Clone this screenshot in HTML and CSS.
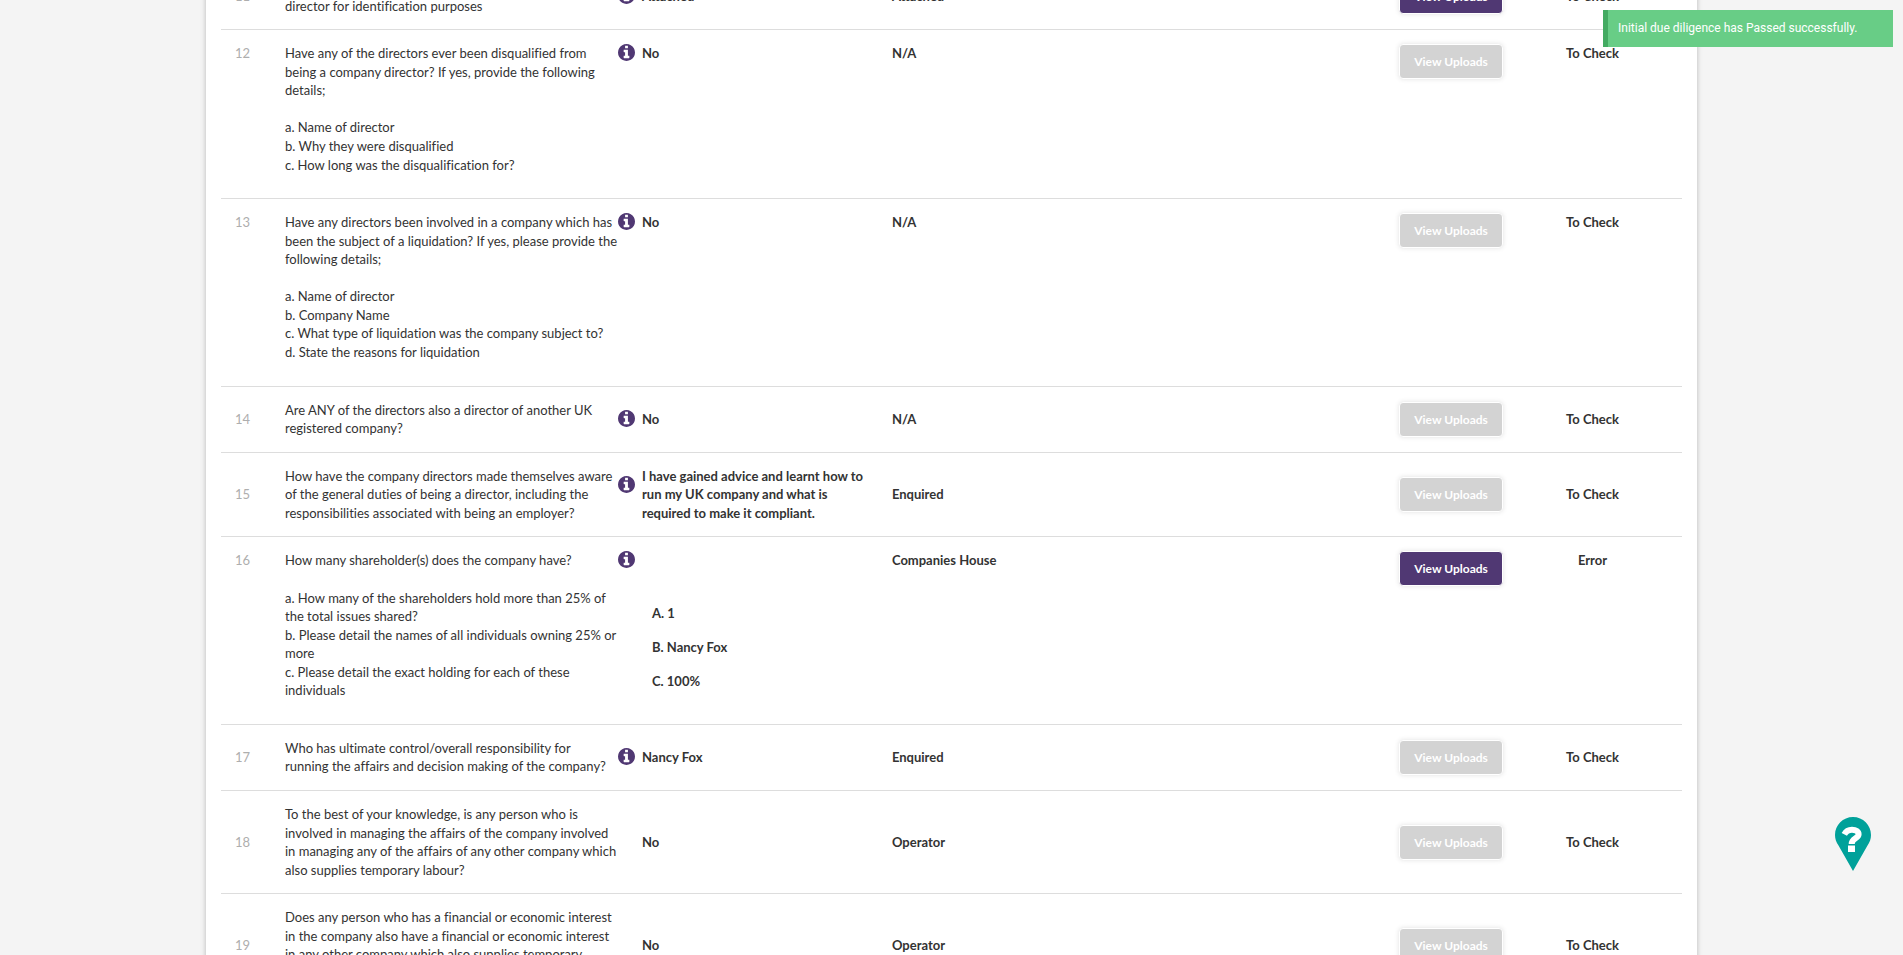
FILE: index.html
```html
<!DOCTYPE html>
<html lang="en">
<head>
<meta charset="utf-8">
<title>Initial due diligence</title>
<link rel="stylesheet" href="styles.css">
</head>
<body>
<svg class="sprite" aria-hidden="true">
  <symbol id="info" viewBox="0 0 1536 1536">
    <path d="M1024 1248v-160q0-14-9-23t-23-9h-96V544q0-14-9-23t-23-9H544q-14 0-23 9t-9 23v160q0 14 9 23t23 9h96v320h-96q-14 0-23 9t-9 23v160q0 14 9 23t23 9h448q14 0 23-9t9-23zM896 352V192q0-14-9-23t-23-9H672q-14 0-23 9t-9 23v160q0 14 9 23t23 9h192q14 0 23-9t9-23zm640 416q0 209-103 385.500T1153.500 1433 768 1536t-385.500-103T103 1153.500 0 768t103-385.500T382.500 103 768 0t385.500 103T1433 382.500 1536 768z"/>
  </symbol>
</svg>
<div class="page">
<main class="card">
<table class="checks">
  <colgroup>
    <col class="col-number"><col class="col-question"><col class="col-info"><col class="col-answer"><col><col class="col-action"><col class="col-status">
  </colgroup>
  <tbody>
    <tr>
      <td class="number">11</td>
      <td class="question"><br>director for identification purposes</td>
      <td class="info"><svg><use href="#info"/></svg></td>
      <td class="answer">Attached</td>
      <td class="source">Attached</td>
      <td class="action"><button type="button">View Uploads</button></td>
      <td class="status">To Check</td>
    </tr>
    <tr class="top">
      <td class="number">12</td>
      <td class="question"><p>Have any of the directors ever been disqualified from being a company director? If yes, provide the following details;<br><br>a. Name of director<br>b. Why they were disqualified<br>c. How long was the disqualification for?</p></td>
      <td class="info"><svg><use href="#info"/></svg></td>
      <td class="answer">No</td>
      <td class="source">N/A</td>
      <td class="action"><button type="button" disabled>View Uploads</button></td>
      <td class="status">To Check</td>
    </tr>
    <tr class="top">
      <td class="number">13</td>
      <td class="question"><p>Have any directors been involved in a company which has been the subject of a liquidation? If yes, please provide the following details;<br><br>a. Name of director<br>b. Company Name<br>c. What type of liquidation was the company subject to?<br>d. State the reasons for liquidation</p></td>
      <td class="info"><svg><use href="#info"/></svg></td>
      <td class="answer">No</td>
      <td class="source">N/A</td>
      <td class="action"><button type="button" disabled>View Uploads</button></td>
      <td class="status">To Check</td>
    </tr>
    <tr>
      <td class="number">14</td>
      <td class="question">Are ANY of the directors also a director of another UK registered company?</td>
      <td class="info"><svg><use href="#info"/></svg></td>
      <td class="answer">No</td>
      <td class="source">N/A</td>
      <td class="action"><button type="button" disabled>View Uploads</button></td>
      <td class="status">To Check</td>
    </tr>
    <tr>
      <td class="number">15</td>
      <td class="question">How have the company directors made themselves aware of the general duties of being a director, including the responsibilities associated with being an employer?</td>
      <td class="info info-raised"><svg><use href="#info"/></svg></td>
      <td class="answer">I have gained advice and learnt how to run my UK company and what is required to make it compliant.</td>
      <td class="source">Enquired</td>
      <td class="action"><button type="button" disabled>View Uploads</button></td>
      <td class="status">To Check</td>
    </tr>
    <tr class="top">
      <td class="number">16</td>
      <td class="question"><p>How many shareholder(s) does the company have?<br><br>a. How many of the shareholders hold more than 25% of the total issues shared?<br>b. Please detail the names of all individuals owning 25% or more<br>c. Please detail the exact holding for each of these individuals</p></td>
      <td class="info"><svg><use href="#info"/></svg></td>
      <td class="answer"><div class="parts"><span>A. 1</span><span>B. Nancy Fox</span><span>C. 100%</span></div></td>
      <td class="source">Companies House</td>
      <td class="action"><button type="button">View Uploads</button></td>
      <td class="status">Error</td>
    </tr>
    <tr>
      <td class="number">17</td>
      <td class="question">Who has ultimate control/overall responsibility for<br>running the affairs and decision making of the company?</td>
      <td class="info"><svg><use href="#info"/></svg></td>
      <td class="answer">Nancy Fox</td>
      <td class="source">Enquired</td>
      <td class="action"><button type="button" disabled>View Uploads</button></td>
      <td class="status">To Check</td>
    </tr>
    <tr>
      <td class="number">18</td>
      <td class="question">To the best of your knowledge, is any person who is involved in managing the affairs of the company involved in managing any of the affairs of any other company which also supplies temporary labour?</td>
      <td class="info"></td>
      <td class="answer">No</td>
      <td class="source">Operator</td>
      <td class="action"><button type="button" disabled>View Uploads</button></td>
      <td class="status">To Check</td>
    </tr>
    <tr>
      <td class="number">19</td>
      <td class="question">Does any person who has a financial or economic interest in the company also have a financial or economic interest in any other company which also supplies temporary labour?</td>
      <td class="info"></td>
      <td class="answer">No</td>
      <td class="source">Operator</td>
      <td class="action"><button type="button" disabled>View Uploads</button></td>
      <td class="status">To Check</td>
    </tr>
  </tbody>
</table>
</main>
</div>
<div class="toast" role="status">Initial due diligence has Passed successfully.</div>
<button class="help" type="button" aria-label="Help">
  <svg viewBox="0 0 36 54">
    <path fill="#00a19a" d="M18 0C8 0 0 8 0 18c0 4 1.200 7 3.500 10.500L18 54l14.500-25.500C34.800 25 36 22 36 18 36 8 28 0 18 0z"/>
    <path fill="none" stroke="#fff" stroke-width="6" d="M9.300 17.300c1.700-3.200 4.500-4.600 7.700-4.600 4 0 6.600 1.700 6.600 4.600 0 4.400-6.900 3.700-6.900 9.700"/>
    <path fill="#fff" d="M13 28.500h7V35h-7z"/>
  </svg>
</button>
</body>
</html>
```
FILE: styles.css
```css
* {
  box-sizing: border-box;
}

body {
  margin: 0;
  background: #f4f4f4;
  color: #333;
  font-family: Lato, "Liberation Sans", sans-serif;
  font-size: 13px;
  line-height: 1.428;
}

.sprite {
  position: absolute;
  width: 0;
  height: 0;
}

.page {
  height: 100vh;
  padding: 0 206px;
  overflow: hidden;
}

/* The list is shown scrolled down to question 11. */
.card {
  margin-top: -52px;
  padding: 15px;
  background: #fff;
  box-shadow: 0 0 5px rgba(0, 0, 0, 0.25);
}

.checks {
  width: 100%;
  table-layout: fixed;
  border-collapse: separate;
  border-spacing: 0;
}

.col-number { width: 50px; }
.col-question { width: 23.75%; }
.col-info { width: 24px; }
.col-answer { width: 16.15%; }
.col-action { width: 118px; }
.col-status { width: 12.25%; }

td {
  padding: 14px 0 14px 14px;
  border-top: 1px solid #ddd;
  vertical-align: middle;
}

.top td {
  vertical-align: top;
}

.number {
  color: #aeaeae;
}

.question {
  font-variant-ligatures: none;
}

.question p {
  margin: 0 0 10px;
}

.info,
.answer {
  padding-left: 0;
}

.answer {
  padding-right: 10px;
}

.answer,
.source,
.status {
  font-weight: 700;
}

.info svg {
  display: block;
  width: 17px;
  height: 17px;
  margin-bottom: 2px;
  fill: #503873;
}

.info-raised svg {
  margin-bottom: 20px;
}

.parts {
  display: flex;
  flex-direction: column;
  gap: 15px;
  padding: 53px 0 0 10px;
}

.action button {
  display: block;
  width: 104px;
  height: 35px;
  padding: 0;
  border: 1px solid #fff;
  border-radius: 4px;
  background: #503873;
  box-shadow: 0 0 5px rgba(0, 0, 0, 0.12);
  color: #fff;
  font: 700 12px Lato, "Liberation Sans", sans-serif;
}

.action button:disabled {
  background: #d3d3d3;
}

.status {
  padding-left: 0;
  text-align: center;
}

.toast {
  position: fixed;
  top: 10px;
  right: 10px;
  width: 290px;
  padding: 10px;
  border-left: 5px solid #43ab62;
  background: #68cd86;
  color: #fff;
  font-family: Roboto, "Liberation Sans", sans-serif;
  font-size: 12px;
  line-height: 17px;
}

.help {
  position: fixed;
  right: 32px;
  bottom: 84px;
  padding: 0;
  border: 0;
  background: none;
}

.help svg {
  display: block;
  width: 36px;
  height: 54px;
}
```
